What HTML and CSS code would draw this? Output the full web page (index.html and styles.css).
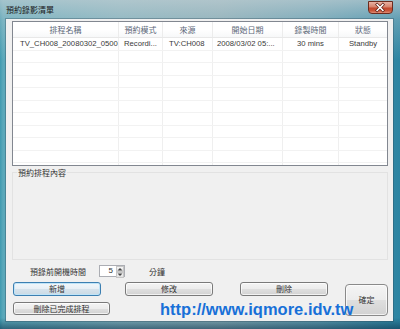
FILE: index.html
```html
<!DOCTYPE html>
<html>
<head>
<meta charset="utf-8">
<link rel="stylesheet" href="styles.css">
</head>
<body>
<div class="window">
  <div class="titlebar">
    <span class="title">預約錄影清單</span>
    <span class="close">
      <svg width="25" height="13" viewBox="0 0 25 13">
        <path d="M9.5 3.5 L15.5 9.5 M15.5 3.5 L9.5 9.5" stroke="#5a1a10" stroke-width="3" stroke-linecap="square"/>
        <path d="M9.5 3.5 L15.5 9.5 M15.5 3.5 L9.5 9.5" stroke="#ffffff" stroke-width="1.6" stroke-linecap="square"/>
      </svg>
    </span>
  </div>
  <div class="client">
    <div class="listview">
      <div class="lv-head">
        <div class="cell">排程名稱</div>
        <div class="cell">預約模式</div>
        <div class="cell">來源</div>
        <div class="cell">開始日期</div>
        <div class="cell">錄製時間</div>
        <div class="cell last">狀態</div>
      </div>
      <div class="lv-body">
        <div class="lv-row data">
          <div class="cell c1">TV_CH008_20080302_0500</div>
          <div class="cell c2">Recordi...</div>
          <div class="cell c3">TV:CH008</div>
          <div class="cell c4">2008/03/02 05:...</div>
          <div class="cell c5">30 mins</div>
          <div class="cell c6 last">Standby</div>
        </div>
        <div class="lv-row"><div class="cell"></div><div class="cell"></div><div class="cell"></div><div class="cell"></div><div class="cell"></div><div class="cell last"></div></div>
        <div class="lv-row"><div class="cell"></div><div class="cell"></div><div class="cell"></div><div class="cell"></div><div class="cell"></div><div class="cell last"></div></div>
        <div class="lv-row"><div class="cell"></div><div class="cell"></div><div class="cell"></div><div class="cell"></div><div class="cell"></div><div class="cell last"></div></div>
        <div class="lv-row"><div class="cell"></div><div class="cell"></div><div class="cell"></div><div class="cell"></div><div class="cell"></div><div class="cell last"></div></div>
        <div class="lv-row"><div class="cell"></div><div class="cell"></div><div class="cell"></div><div class="cell"></div><div class="cell"></div><div class="cell last"></div></div>
        <div class="lv-row"><div class="cell"></div><div class="cell"></div><div class="cell"></div><div class="cell"></div><div class="cell"></div><div class="cell last"></div></div>
        <div class="lv-row"><div class="cell"></div><div class="cell"></div><div class="cell"></div><div class="cell"></div><div class="cell"></div><div class="cell last"></div></div>
        <div class="lv-row"><div class="cell"></div><div class="cell"></div><div class="cell"></div><div class="cell"></div><div class="cell"></div><div class="cell last"></div></div>
        <div class="lv-row"><div class="cell"></div><div class="cell"></div><div class="cell"></div><div class="cell"></div><div class="cell"></div><div class="cell last"></div></div>
      </div>
    </div>

    <fieldset class="detail">
      <legend>預約排程內容</legend>
    </fieldset>

    <div class="prerec">
      <span class="lbl">預錄前開機時間</span>
      <div class="spin">
        <span class="val">5</span>
        <span class="arrows">
          <span class="arr up"><svg width="6" height="4" viewBox="0 0 6 4"><path d="M0.5 3.5 L3 1 L5.5 3.5 Z" fill="#444"/></svg></span>
          <span class="arr down"><svg width="6" height="4" viewBox="0 0 6 4"><path d="M0.5 0.5 L3 3 L5.5 0.5 Z" fill="#444"/></svg></span>
        </span>
      </div>
      <span class="unit">分鐘</span>
    </div>

    <div class="actions">
      <div class="left">
        <div class="row1">
          <button class="btn default">新增</button>
          <button class="btn mid">修改</button>
          <button class="btn del">刪除</button>
        </div>
        <div class="row2">
          <button class="btn wide">刪除已完成排程</button>
        </div>
      </div>
      <button class="btn ok">確定</button>
    </div>

    <div class="watermark">http://www.iqmore.idv.tw</div>
  </div>
</div>
</body>
</html>
```

FILE: styles.css
```css
html, body {
  margin: 0;
  padding: 0;
  width: 400px;
  height: 329px;
  overflow: hidden;
  background: #ffffff;
}

.window {
  width: 400px;
  height: 329px;
  display: flex;
  flex-direction: column;
  box-sizing: border-box;
  background:
    linear-gradient(to bottom, rgba(0,0,0,0) 0, rgba(0,0,0,0) 318px, rgba(10,45,70,0.55) 329px),
    linear-gradient(to bottom, rgba(190,205,210,0.75) 0, rgba(190,205,210,0.35) 20px, rgba(190,205,210,0) 60px),
    linear-gradient(to right, #3f9ab0 0, #5aa8ba 3px, #7fb0bc 30%, #84aab4 55%, #5e9cb0 80%, #2c84a2 100%);
}

.titlebar {
  height: 19px;
  flex: none;
  display: flex;
  justify-content: space-between;
  align-items: flex-start;
  padding: 0 7px 0 6px;
}

.title {
  font-family: "Noto Sans CJK TC", "Noto Sans CJK SC", sans-serif;
  font-size: 8px;
  line-height: 19px;
  color: #1a1a1a;
}

.close {
  margin-top: 1px;
  width: 25px;
  height: 13px;
  box-sizing: border-box;
  border: 1px solid #6b2b1e;
  border-radius: 0 0 4px 4px;
  background: linear-gradient(to bottom, #e8b2a4 0, #d6826c 45%, #c2472e 55%, #c9563a 80%, #e0907a 100%);
  display: flex;
}

.close svg {
  margin: -1px 0 0 -1px;
}

.client {
  flex: 1;
  margin: 0 7px 8px 6px;
  background: #f0f0f0;
  position: relative;
  padding: 2px 5px 0 6px;
  display: flex;
  flex-direction: column;
  box-shadow: 0 0 0 1px rgba(40,70,85,0.35);
}

/* list view */
.listview {
  height: 145px;
  box-sizing: border-box;
  border: 1px solid #828790;
  background: #ffffff;
  display: flex;
  flex-direction: column;
  font-family: "Liberation Sans", sans-serif;
}

.lv-head, .lv-row {
  display: grid;
  grid-template-columns: 106px 44px 50px 70px 56px 48px;
}

.lv-head {
  height: 16px;
  box-sizing: border-box;
  border-bottom: 1px solid #e8e8e8;
  background: linear-gradient(to bottom, #ffffff 0, #ffffff 50%, #f7f8f9 100%);
}

.lv-head .cell {
  font-family: "Noto Sans CJK TC", "Noto Sans CJK SC", sans-serif;
  font-size: 8px;
  line-height: 15px;
  color: #5c6878;
  text-align: center;
  border-right: 1px solid #ececec;
}

.lv-body {
  flex: 1;
  background:
    linear-gradient(to right,
      transparent 105px, #efefef 105px, #efefef 106px,
      transparent 106px, transparent 149px, #efefef 149px, #efefef 150px,
      transparent 150px, transparent 199px, #efefef 199px, #efefef 200px,
      transparent 200px, transparent 269px, #efefef 269px, #efefef 270px,
      transparent 270px, transparent 325px, #efefef 325px, #efefef 326px,
      transparent 326px);
}

.lv-row {
  height: 12.5px;
  box-sizing: border-box;
  border-bottom: 1px solid #f2f2f2;
}

.lv-row .cell {
  border-right: 1px solid #efefef;
  font-size: 7.7px;
  line-height: 12px;
  color: #3a3a3a;
  white-space: nowrap;
  overflow: hidden;
}

.cell.last {
  border-right: none;
}

.lv-row .c1 { padding-left: 7px; }
.lv-row .c2 { padding-left: 5px; }
.lv-row .c3 { padding-left: 6px; }
.lv-row .c4 { padding-left: 4px; }
.lv-row .c5 { text-align: center; }
.lv-row .c6 { text-align: center; }

/* details group */
.detail {
  margin: 1px 0 0 0;
  padding: 0;
  min-width: 0;
  height: 93px;
  box-sizing: border-box;
  border: 1px solid #e2e2e2;
  border-radius: 0;
}

.detail legend {
  font-family: "Noto Sans CJK TC", "Noto Sans CJK SC", sans-serif;
  font-size: 8px;
  line-height: 11px;
  color: #333;
  padding: 0 1px;
  margin-left: 4px;
}

/* pre-record row */
.prerec {
  margin-top: 5px;
  height: 12px;
  display: flex;
  align-items: center;
  font-family: "Noto Sans CJK TC", "Noto Sans CJK SC", sans-serif;
  font-size: 8px;
  color: #333;
}

.prerec .lbl {
  margin-left: 18px;
}

.spin {
  margin-left: 13px;
  width: 26px;
  height: 12px;
  box-sizing: border-box;
  border: 1px solid #abadb3;
  background: #fff;
  display: flex;
  justify-content: flex-end;
}

.spin .val {
  font-family: "Liberation Sans", sans-serif;
  font-size: 8px;
  line-height: 10px;
  margin-right: 3px;
}

.arrows {
  width: 8px;
  display: flex;
  flex-direction: column;
}

.arr {
  flex: 1;
  display: flex;
  align-items: center;
  justify-content: center;
  border: 1px solid #c6c6c6;
  background: linear-gradient(#f6f6f6, #e0e0e0);
  box-sizing: border-box;
}

.prerec .unit {
  margin-left: 24px;
}

/* buttons */
.actions {
  margin-top: 5px;
  display: flex;
  align-items: flex-start;
}

.left {
  margin-left: 1px;
  display: flex;
  flex-direction: column;
  gap: 6px;
}

.row1, .row2 {
  display: flex;
}

.btn {
  font-family: "Noto Sans CJK TC", "Noto Sans CJK SC", sans-serif;
  font-size: 8px;
  color: #333;
  height: 14px;
  line-height: 12px;
  padding: 0;
  margin: 0;
  box-sizing: border-box;
  border: 1px solid #7a7a7a;
  border-radius: 3px;
  background: linear-gradient(to bottom, #f4f4f4 0, #ececec 50%, #dfdfdf 51%, #d2d2d2 100%);
  box-shadow: inset 0 0 0 1px rgba(255,255,255,0.7);
}

.btn.default {
  width: 88px;
  border-color: #3c7fb1;
  background: linear-gradient(to bottom, #f1f7fb 0, #e7eff5 50%, #d6e3ec 51%, #cad9e4 100%);
  box-shadow: inset 0 0 0 1px #bfe4f8;
}

.btn.mid {
  width: 88px;
  margin-left: 24px;
}

.btn.del {
  width: 88px;
  margin-left: 27px;
}

.btn.wide {
  width: 97px;
  height: 13px;
  line-height: 11px;
}

.btn.ok {
  width: 43px;
  height: 32px;
  margin-left: 17px;
  margin-top: 2px;
  border-radius: 4px;
  border-color: #8a8a8a;
}

.watermark {
  position: absolute;
  left: 154px;
  top: 282px;
  font-family: "Liberation Sans", Arial, sans-serif;
  font-weight: bold;
  font-size: 16.5px;
  line-height: 16.5px;
  color: #1870d8;
  white-space: nowrap;
}
```
